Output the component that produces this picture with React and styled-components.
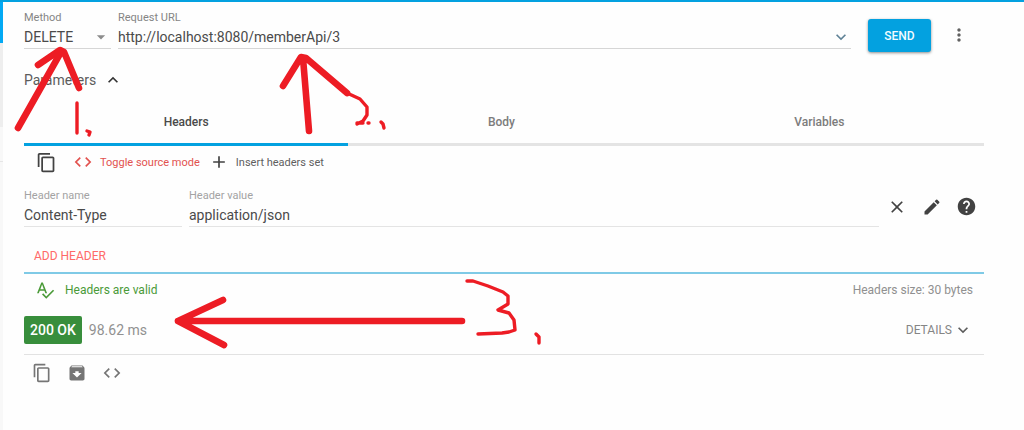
import { useState } from "react";
import styled, { createGlobalStyle } from "styled-components";
import {
  MdAdd,
  MdArchive,
  MdArrowDropDown,
  MdClose,
  MdCode,
  MdContentCopy,
  MdEdit,
  MdExpandLess,
  MdExpandMore,
  MdHelp,
  MdMoreVert,
  MdSpellcheck,
} from "react-icons/md";

const GlobalStyle = createGlobalStyle`
  * {
    box-sizing: border-box;
  }
  body {
    margin: 0;
    background-color: #fefefe;
    color: #4a4a4a;
    font-family: Roboto, "Liberation Sans", sans-serif;
    font-size: 14px;
  }
  button, input, select {
    font: inherit;
    color: inherit;
    margin: 0;
    padding: 0;
    border: none;
    background: none;
    outline: none;
  }
  svg {
    flex-shrink: 0;
  }
`;

const Page = styled.div`
  position: relative;
  display: flex;
  min-height: 100vh;
  border-top: 2px solid #03a1e0;
`;

const Rail = styled.aside`
  display: flex;
  flex-direction: column;
  width: 3px;
`;

const RailPart = styled.div`
  height: ${(props) => props.$height};
  flex-grow: ${(props) => (props.$height ? 0 : 1)};
  background-color: ${(props) => props.$color};
  border-bottom: ${(props) => (props.$line ? "1px solid #e6e6e6" : "none")};
`;

const Main = styled.main`
  flex: 1;
  min-width: 0;
  padding: 9px 40px 16px 21px;
`;

const RequestRow = styled.div`
  display: flex;
  align-items: flex-end;
  padding-right: 15px;
`;

const Field = styled.label`
  display: flex;
  flex-direction: column;
  flex: ${(props) => (props.$width ? "none" : "1")};
  width: ${(props) => props.$width || "auto"};
  min-width: 0;
  margin-right: 7px;
  margin-bottom: ${(props) => (props.$raised ? "3px" : "0")};
`;

const FieldName = styled.span`
  font-size: 11px;
  line-height: 14px;
  color: ${(props) => (props.$light ? "#a3a3a3" : "#858585")};
`;

const FieldLine = styled.span`
  display: flex;
  align-items: center;
  height: 24px;
  border-bottom: 1px solid ${(props) => (props.$light ? "#e4e4e4" : "#d6d6d6")};
`;

const Input = styled.input`
  flex: 1;
  min-width: 0;
`;

const Select = styled.select`
  flex: 1;
  min-width: 0;
  appearance: none;
`;

const SendButton = styled.button`
  width: 63px;
  height: 33px;
  margin: 0 18px 0 10px;
  border-radius: 3px;
  background-color: #03a1e0;
  box-shadow: 0 1px 3px rgba(0, 0, 0, 0.45);
  color: #f2fbff;
  font-size: 12px;
  font-weight: 500;
`;

const IconButton = styled.button`
  display: flex;
  align-items: center;
  justify-content: center;
  width: ${(props) => (props.$narrow ? "20px" : "35px")};
  height: 35px;
  color: ${(props) => props.$color || "#424242"};
`;

const ParametersButton = styled.button`
  display: flex;
  align-items: center;
  gap: 7px;
  height: 24px;
  margin-top: 16px;
  color: #5c5c5c;
`;

const Tabs = styled.div`
  display: flex;
  margin-top: 6px;
`;

const Tab = styled.button`
  flex: 1 1 auto;
  height: 48px;
  padding-top: 2px;
  border-bottom: 3px solid ${(props) => (props.$active ? "#03a1e0" : "#e4e4e4")};
  color: ${(props) => (props.$active ? "#4a4a4a" : "#7c7c7c")};
  font-size: 12px;
  font-weight: 500;
`;

const Toolbar = styled.div`
  display: flex;
  align-items: center;
  gap: 9px;
  height: 32px;
  padding-left: 5px;
`;

const ToolButton = styled.button`
  display: flex;
  align-items: center;
  gap: 7px;
  color: ${(props) => (props.$accent ? "#e2524f" : "#5f5f5f")};
  font-size: 11px;
  svg {
    color: ${(props) => (props.$accent ? "#e2524f" : "#424242")};
  }
`;

const HeaderRow = styled.div`
  display: flex;
  align-items: flex-start;
  margin-top: 11px;
`;

const HeaderActions = styled.div`
  display: flex;
  margin-left: -7px;
`;

const AddRow = styled.div`
  margin-top: 13px;
  border-bottom: 2px solid #7fcae6;
`;

const AddButton = styled.button`
  height: 32px;
  padding-left: 10px;
  color: #ff6a68;
  font-size: 12px;
`;

const Row = styled.div`
  display: flex;
  align-items: center;
  justify-content: space-between;
  height: ${(props) => props.$height};
  padding-right: 11px;
  border-bottom: ${(props) => (props.$line ? "1px solid #e2e2e2" : "none")};
`;

const Valid = styled.span`
  display: flex;
  align-items: center;
  gap: 10px;
  padding-left: 11px;
  color: #4a9a38;
  font-size: 12px;
`;

const Size = styled.span`
  color: #909090;
  font-size: 12px;
`;

const Result = styled.div`
  display: flex;
  align-items: center;
  gap: 7px;
  color: #919191;
`;

const Status = styled.span`
  padding: 0 6px;
  border-radius: 2px;
  background-color: #388e3c;
  color: #ffffff;
  font-weight: 500;
  line-height: 28px;
`;

const DetailsButton = styled.button`
  display: flex;
  align-items: center;
  gap: 1px;
  color: #858585;
  font-size: 12px;
  svg {
    color: #5c5c5c;
  }
`;

const ResponseActions = styled.footer`
  display: flex;
`;

const Notes = styled.svg`
  position: absolute;
  top: -2px;
  left: 0;
  pointer-events: none;
  fill: none;
  stroke: #ed1c24;
  stroke-linecap: round;
  stroke-linejoin: round;
`;

const tabs = ["Headers", "Body", "Variables"];

function RequestNotes() {
  return (
    <Notes width="1024" height="430" viewBox="0 0 1024 430" aria-hidden="true">
      <g strokeWidth="6.6">
        <path d="M18 128 L61 52 M38 65 L60 50 L64 52 L79 88" />
        <path d="M309 131 L303 58 M283 86 L301 57 L306 58 L347 93" />
        <path d="M462 321 H178 M223 300 L178 321 L224 345" />
      </g>
      <g strokeWidth="3.4">
        <path d="M77 103 V133 M87 131 L90 132 L89 135" />
        <path d="M347 93 L360 99 L367 107 L367 115 L363 121 L357 124 M357 123 L363 123 M368 123 H369 M381 122 L383 124 L384 128" />
        <path d="M467 281 H473 L488 286 L503 292 L508 296 L508 304 L498 310 L509 313 L514 320 L515 330 L509 332 L502 333 L478 334" />
        <path d="M536 334 L539 337 V343" />
      </g>
    </Notes>
  );
}

export default function App() {
  const [method, setMethod] = useState("DELETE");
  const [url, setUrl] = useState("http://localhost:8080/memberApi/3");
  const [name, setName] = useState("Content-Type");
  const [value, setValue] = useState("application/json");
  const [activeTab, setActiveTab] = useState("Headers");

  return (
    <Page>
      <GlobalStyle />
      <Rail>
        <RailPart $height="41px" $color="#03a9f4" />
        <RailPart $height="84px" $color="#eeeeee" />
        <RailPart $height="35px" $color="#f8f8f8" $line />
        <RailPart $color="#f8f8f8" />
      </Rail>

      <Main>
        <RequestRow>
          <Field $width="87px" $raised>
            <FieldName>Method</FieldName>
            <FieldLine>
              <Select value={method} onChange={(e) => setMethod(e.target.value)}>
                <option>GET</option>
                <option>POST</option>
                <option>PUT</option>
                <option>DELETE</option>
              </Select>
              <MdArrowDropDown size={20} color="#8c8c8c" />
            </FieldLine>
          </Field>
          <Field $raised>
            <FieldName>Request URL</FieldName>
            <FieldLine>
              <Input value={url} onChange={(e) => setUrl(e.target.value)} />
              <MdExpandMore size={20} color="#5f8296" />
            </FieldLine>
          </Field>
          <SendButton>SEND</SendButton>
          <IconButton $narrow $color="#616161" aria-label="More options">
            <MdMoreVert size={20} />
          </IconButton>
        </RequestRow>

        <ParametersButton>
          Parameters
          <MdExpandLess size={20} color="#333333" />
        </ParametersButton>

        <Tabs role="tablist">
          {tabs.map((tab) => (
            <Tab
              key={tab}
              role="tab"
              aria-selected={tab === activeTab}
              $active={tab === activeTab}
              onClick={() => setActiveTab(tab)}
            >
              {tab}
            </Tab>
          ))}
        </Tabs>

        <Toolbar>
          <IconButton aria-label="Copy headers">
            <MdContentCopy size={21} />
          </IconButton>
          <ToolButton $accent>
            <MdCode size={20} />
            Toggle source mode
          </ToolButton>
          <ToolButton>
            <MdAdd size={20} />
            Insert headers set
          </ToolButton>
        </Toolbar>

        <HeaderRow>
          <Field $width="158px">
            <FieldName $light>Header name</FieldName>
            <FieldLine $light>
              <Input value={name} onChange={(e) => setName(e.target.value)} />
            </FieldLine>
          </Field>
          <Field>
            <FieldName $light>Header value</FieldName>
            <FieldLine $light>
              <Input value={value} onChange={(e) => setValue(e.target.value)} />
            </FieldLine>
          </Field>
          <HeaderActions>
            <IconButton aria-label="Remove header">
              <MdClose size={20} />
            </IconButton>
            <IconButton aria-label="Edit header">
              <MdEdit size={20} />
            </IconButton>
            <IconButton aria-label="Help">
              <MdHelp size={21} />
            </IconButton>
          </HeaderActions>
        </HeaderRow>

        <AddRow>
          <AddButton>ADD HEADER</AddButton>
        </AddRow>

        <Row $height="32px">
          <Valid>
            <MdSpellcheck size={20} />
            Headers are valid
          </Valid>
          <Size>Headers size: 30 bytes</Size>
        </Row>

        <Row $height="49px" $line>
          <Result>
            <Status>200 OK</Status>
            98.62 ms
          </Result>
          <DetailsButton>
            DETAILS
            <MdExpandMore size={20} />
          </DetailsButton>
        </Row>

        <ResponseActions>
          <IconButton $color="#757575" aria-label="Copy response">
            <MdContentCopy size={20} />
          </IconButton>
          <IconButton $color="#757575" aria-label="Save response">
            <MdArchive size={20} />
          </IconButton>
          <IconButton $color="#757575" aria-label="View source">
            <MdCode size={20} />
          </IconButton>
        </ResponseActions>
      </Main>
      <RequestNotes />
    </Page>
  );
}
